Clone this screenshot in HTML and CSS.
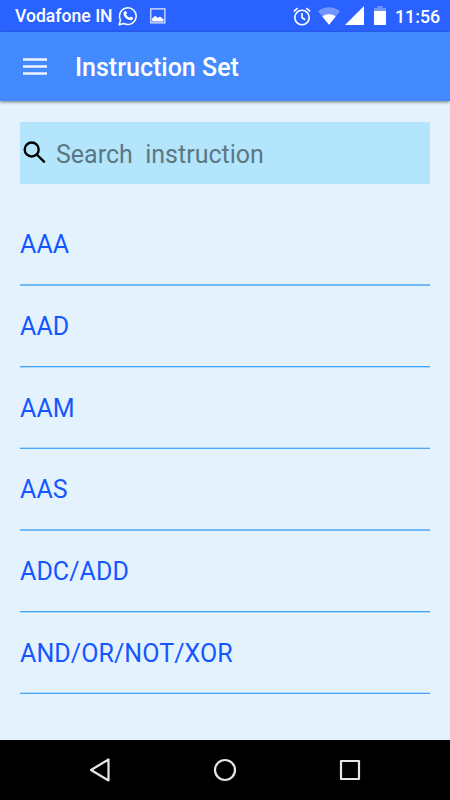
FILE: index.html
```html
<!DOCTYPE html>
<html lang="en">
<head>
<meta charset="utf-8">
<title>Instruction Set</title>
<link rel="stylesheet" href="styles.css">
</head>
<body>
<div class="screen">
  <div class="status">
    <span class="carrier">Vodafone IN</span>
    <svg class="whatsapp" width="20" height="20" viewBox="0 0 20 20"><path d="M1.2 18.8 2.5 14A8.3 8.3 0 1 1 6 17.5Z" fill="none" stroke="#fff" stroke-width="1.5" stroke-linejoin="round"/><path d="M6.9 5.2c.5-.4 1-.3 1.3.3l.7 1.600c.2.5-.6 1-.8 1.400.8 1.500 1.900 2.500 3.400 3.200.5-.3.9-1.200 1.500-1l1.800.9c.5.3.2 1.400-.3 1.900-1 .9-2.300.9-3.800.3-2.500-1-4.300-2.900-5.100-5.100-.5-1.500.2-2.900 1.300-3.500z" fill="#fff"/></svg>
    <svg class="picture" width="16" height="16" viewBox="0 0 16 16"><path d="M.8.8h14.100v14.100H.8z" fill="none" stroke="#e5ebff" stroke-width="1.200"/><path d="M2.200 13.500v-3.200l1.600-1.300 1.700-1.300 2.300 2.300 1.600-1.200 1.600.2 1 1.500 1.500.3v2.700z" fill="#fff"/></svg>
    <div class="indicators">
      <svg class="alarm" width="18" height="19" viewBox="0 0 18 19"><g fill="none" stroke="#fff" stroke-width="1.6"><circle cx="9" cy="10.5" r="7.2"/><path d="M.8 4.4 4.7 1.1M17.2 4.4l-3.9-3.3M9 6v4.8l3.3 2"/></g></svg>
      <svg class="wifi" width="22" height="18" viewBox="0 0 22 18"><path d="M0 4.2C6.5-1.1 15.500-1.100 22 4.200L11 17.800z" fill="#7394ff"/><path d="M4.300 9.500C8 6.600 14 6.600 17.700 9.500L11 17.800z" fill="#fff"/></svg>
      <svg class="signal" width="19" height="19" viewBox="0 0 19 19"><path d="M19 0v19H0z" fill="#fff"/></svg>
      <svg class="battery" width="12" height="19" viewBox="0 0 12 19"><path d="M0 2h3.500V0h5v2H12v3H0z" fill="#7394ff"/><path d="M0 5h12v14H0z" fill="#fff"/></svg>
      <span class="clock">11:56</span>
    </div>
  </div>
  <header class="appbar">
    <svg class="menu" width="24" height="17" viewBox="0 0 24 17"><path d="M0 1.500h24M0 8.500h24M0 15.500h24" stroke="#edf4ff" stroke-width="2.300"/></svg>
    <h1>Instruction Set</h1>
  </header>
  <main>
    <div class="search">
      <svg class="glass" width="23" height="23" viewBox="0 0 23 23"><g fill="none" stroke="#000" stroke-width="2.400"><circle cx="8.700" cy="8.500" r="7"/><path d="m13.800 13.500 7.900 7.900"/></g></svg>
      <span class="hint">Search&nbsp; instruction</span>
    </div>
    <ul class="list">
      <li>AAA</li>
      <li>AAD</li>
      <li>AAM</li>
      <li>AAS</li>
      <li>ADC/ADD</li>
      <li>AND/OR/NOT/XOR</li>
    </ul>
  </main>
  <nav class="navbar">
    <svg width="34" height="34" viewBox="0 0 34 34"><path d="M8 17 25.500 6.500v21z"/></svg>
    <svg width="34" height="34" viewBox="0 0 34 34"><circle cx="17" cy="17" r="10"/></svg>
    <svg width="34" height="34" viewBox="0 0 34 34"><path d="M8 8h18v18H8z"/></svg>
  </nav>
</div>
</body>
</html>
```
FILE: styles.css
```css
* { box-sizing: border-box; }
body {
  margin: 0;
  font-family: Roboto, "Liberation Sans", sans-serif;
}
.screen {
  display: flex;
  flex-direction: column;
  width: 450px;
  height: 800px;
  overflow: hidden;
  background: #e3f2fd;
}
svg { display: block; flex: none; }
.status {
  display: flex;
  align-items: center;
  height: 32px;
  padding: 0 10px 0 15px;
  background: #2962ff;
  color: #fff;
  font-size: 17.6px;
  font-weight: 500;
  white-space: nowrap;
}
.carrier { width: 103px; }
.picture { margin-left: 12px; }
.indicators { display: flex; align-items: center; margin-left: auto; }
.wifi { margin-left: 7px; }
.signal { margin: 0 0 1px 5px; }
.battery { margin: 0 0 1px 10px; }
.clock { width: 45px; margin-left: 9px; font-size: 17.8px; }
.appbar {
  display: flex;
  align-items: center;
  height: 69px;
  padding-left: 23px;
  background: #448aff;
  box-shadow: 0 1px 3px rgba(0, 0, 0, .5);
  color: #fff;
}
.appbar h1 {
  margin: 2px 0 0 28px;
  font-size: 25px;
  font-weight: 500;
  line-height: 30px;
}
main { flex: 1; padding: 21px 20px 0; }
.search {
  display: flex;
  height: 62px;
  padding: 19px 0 0 3px;
  background: #b3e5fc;
}
.hint {
  margin: -1px 0 0 10px;
  color: #5b7882;
  font-size: 25px;
  line-height: 30px;
}
.list {
  --line-top: #73b9f8;
  --line-bottom: #73b9f8;
  margin: 20px 0 0;
  padding: 0;
  list-style: none;
}
.list li {
  height: 82px;
  padding-top: 26px;
  background: linear-gradient(var(--line-top) 50%, var(--line-bottom) 50%) left bottom / 100% 2px no-repeat;
  color: #1557ff;
  font-size: 25px;
  letter-spacing: .08px;
  line-height: 30px;
}
.list li:nth-child(3n + 2) {
  --line-top: #42a5f5;
  --line-bottom: #abd6fa;
}
.list li:nth-child(3n) {
  --line-top: #b2d9fa;
  --line-bottom: #4ba6f5;
  height: 81px;
}
.navbar {
  display: flex;
  justify-content: space-between;
  align-items: center;
  height: 60px;
  padding: 0 83px;
  background: #000;
}
.navbar svg {
  fill: none;
  stroke: #e6e6e6;
  stroke-width: 2.200;
  stroke-linejoin: round;
}
```
